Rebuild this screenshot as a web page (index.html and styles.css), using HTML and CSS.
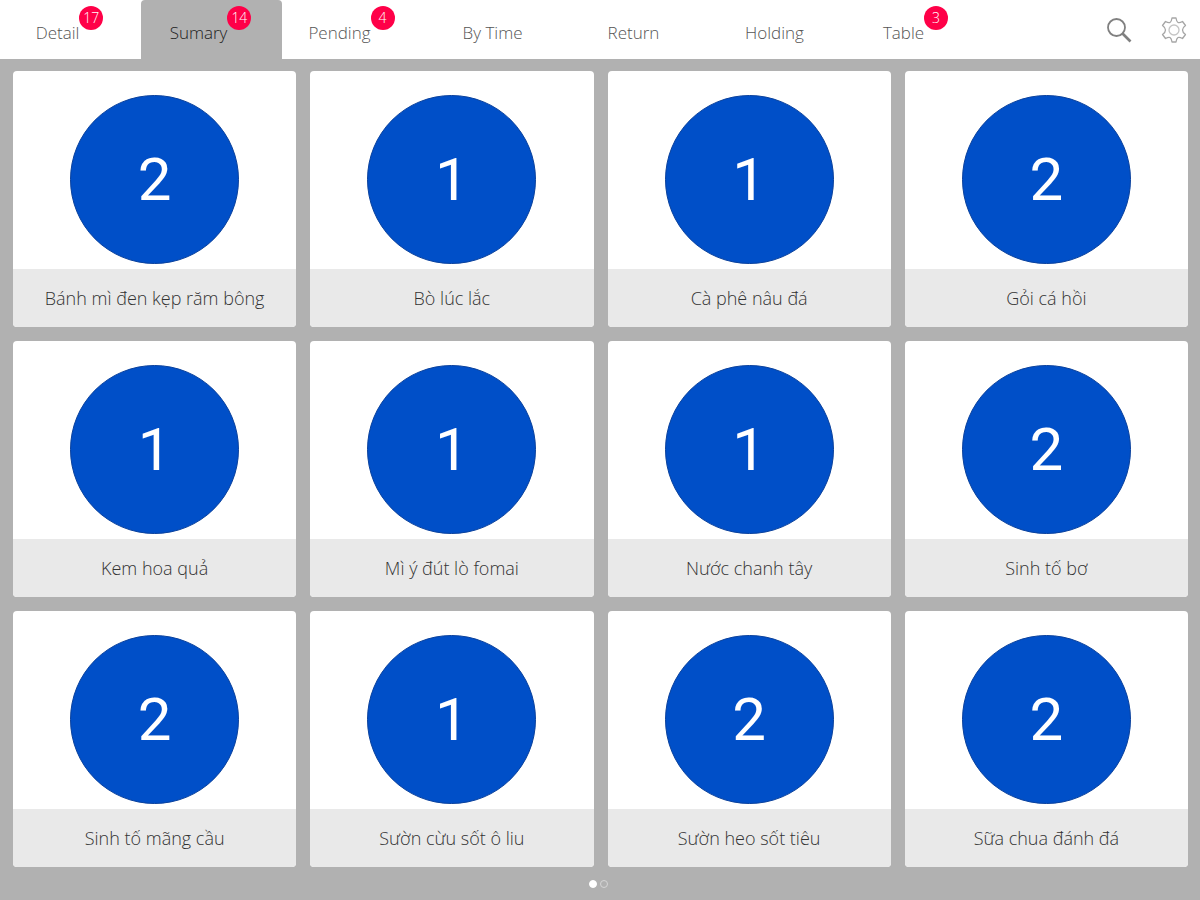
FILE: index.html
```html
<!DOCTYPE html>
<html lang="vi">
<head>
    <meta charset="UTF-8">
    <meta name="viewport" content="width=device-width, initial-scale=1.0">
    <title>Kitchen Summary</title>
    <link rel="stylesheet" href="styles.css">
</head>
<body>
    <header class="top-bar">
        <nav class="tabs">
            <a href="#" class="tab">Detail<span class="badge">17</span></a>
            <a href="#" class="tab active">Sumary<span class="badge">14</span></a>
            <a href="#" class="tab">Pending<span class="badge">4</span></a>
            <a href="#" class="tab">By Time</a>
            <a href="#" class="tab">Return</a>
            <a href="#" class="tab">Holding</a>
            <a href="#" class="tab">Table<span class="badge">3</span></a>
        </nav>
        <div class="actions">
            <button type="button" class="icon-button" aria-label="Search">
                <svg width="28" height="28" viewBox="0 0 28 28" fill="none" stroke="#808080">
                    <circle cx="11.500" cy="11.500" r="8.500" stroke-width="1.800"/>
                    <path d="M17.500 17.500L25.500 25.500" stroke-width="2.600"/>
                </svg>
            </button>
            <button type="button" class="icon-button" aria-label="Settings">
                <svg width="28" height="28" viewBox="0 0 28 28" fill="none" stroke="#a6a6a6" stroke-width="1.300" stroke-linejoin="round">
                    <path d="M12 2H16Q16.500 5.500 18 6.500Q19.500 7.200 22.500 5.500L25.500 9.500Q22.500 11.500 22.500 14Q22.500 16.500 25.500 18.500L22.500 22.500Q19.500 20.800 18 21.500Q16.500 22.500 16 26H12Q11.500 22.500 10 21.500Q8.500 20.800 5.500 22.500L2.500 18.500Q5.500 16.500 5.500 14Q5.500 11.500 2.500 9.500L5.500 5.500Q8.500 7.200 10 6.500Q11.500 5.500 12 2Z"/>
                    <circle cx="14" cy="14" r="5" stroke="#c4c4c4"/>
                </svg>
            </button>
        </div>
    </header>

    <main id="dish-grid" class="dish-grid">
        <!-- Dish cards are added here -->
    </main>

    <div class="pager">
        <button type="button" class="dot current" aria-label="Page 1"></button>
        <button type="button" class="dot" aria-label="Page 2"></button>
    </div>

    <script>
        const dishes = [
            { name: "Bánh mì đen kẹp răm bông", quantity: 2 },
            { name: "Bò lúc lắc", quantity: 1 },
            { name: "Cà phê nâu đá", quantity: 1 },
            { name: "Gỏi cá hồi", quantity: 2 },
            { name: "Kem hoa quả", quantity: 1 },
            { name: "Mì ý đút lò fomai", quantity: 1 },
            { name: "Nước chanh tây", quantity: 1 },
            { name: "Sinh tố bơ", quantity: 2 },
            { name: "Sinh tố mãng cầu", quantity: 2 },
            { name: "Sườn cừu sốt ô liu", quantity: 1 },
            { name: "Sườn heo sốt tiêu", quantity: 2 },
            { name: "Sữa chua đánh đá", quantity: 2 },
        ];

        const dishGrid = document.getElementById('dish-grid');

        function createDishCard(dish) {
            const card = document.createElement('article');
            card.classList.add('dish-card');
            card.innerHTML = `
                <div class="dish-body">
                    <div class="dish-quantity">${dish.quantity}</div>
                </div>
                <h2 class="dish-name">${dish.name}</h2>
            `;
            return card;
        }

        dishes.forEach(dish => {
            dishGrid.appendChild(createDishCard(dish));
        });
    </script>
</body>
</html>
```
FILE: styles.css
```css
* {
    box-sizing: border-box;
}
body {
    font-family: "Open Sans", "Noto Sans", sans-serif;
    font-weight: 300;
    margin: 0;
    min-height: 100vh;
    background-color: #b1b1b1;
    color: #333;
}

/* Top bar */
.top-bar {
    display: flex;
    justify-content: space-between;
    height: 59px;
    background-color: white;
}
.tabs {
    display: grid;
    grid-template-columns: repeat(7, 1fr);
    flex: 1;
    max-width: 987px;
}
.tab {
    display: flex;
    justify-content: center;
    padding: 22px 2px 0 0;
    font-size: 17px;
    line-height: 22px;
    color: #555;
    text-decoration: none;
}
.tab.active {
    background-color: #b1b1b1;
    border-radius: 4px 4px 0 0;
    color: #222;
}
.badge {
    width: 24px;
    height: 24px;
    margin-top: -16px;
    border-radius: 50%;
    background-color: #ff0048;
    color: white;
    font-size: 14px;
    line-height: 24px;
    text-align: center;
}
.actions {
    display: flex;
    align-items: center;
    gap: 27px;
    padding-right: 12px;
}
.icon-button {
    display: flex;
    padding: 0;
    border: none;
    background: none;
    cursor: pointer;
}

/* Dish cards */
.dish-grid {
    display: grid;
    grid-template-columns: repeat(4, 1fr);
    gap: 14px;
    padding: 12px 12px 0 13px;
}
.dish-card {
    background-color: white;
    border-radius: 4px;
    overflow: hidden;
}
.dish-body {
    display: flex;
    justify-content: center;
    padding: 24px 0 5px;
}
.dish-quantity {
    width: 169px;
    height: 169px;
    border: 1px solid #0a419c;
    border-radius: 50%;
    background-color: #004fc8;
    color: white;
    font-family: Roboto, sans-serif;
    font-weight: 400;
    font-size: 60px;
    line-height: 168px;
    text-align: center;
}
.dish-name {
    margin: 0;
    background-color: #e9e9e9;
    font-size: 18px;
    font-weight: 300;
    line-height: 58px;
    text-align: center;
}

/* Page dots */
.pager {
    display: flex;
    justify-content: center;
    gap: 3px;
    padding: 13px 4px 8px 0;
}
.dot {
    width: 8px;
    height: 8px;
    padding: 0;
    border: 1px solid #d6d6d6;
    border-radius: 50%;
    background: none;
}
.dot.current {
    border-color: white;
    background-color: white;
}
```
